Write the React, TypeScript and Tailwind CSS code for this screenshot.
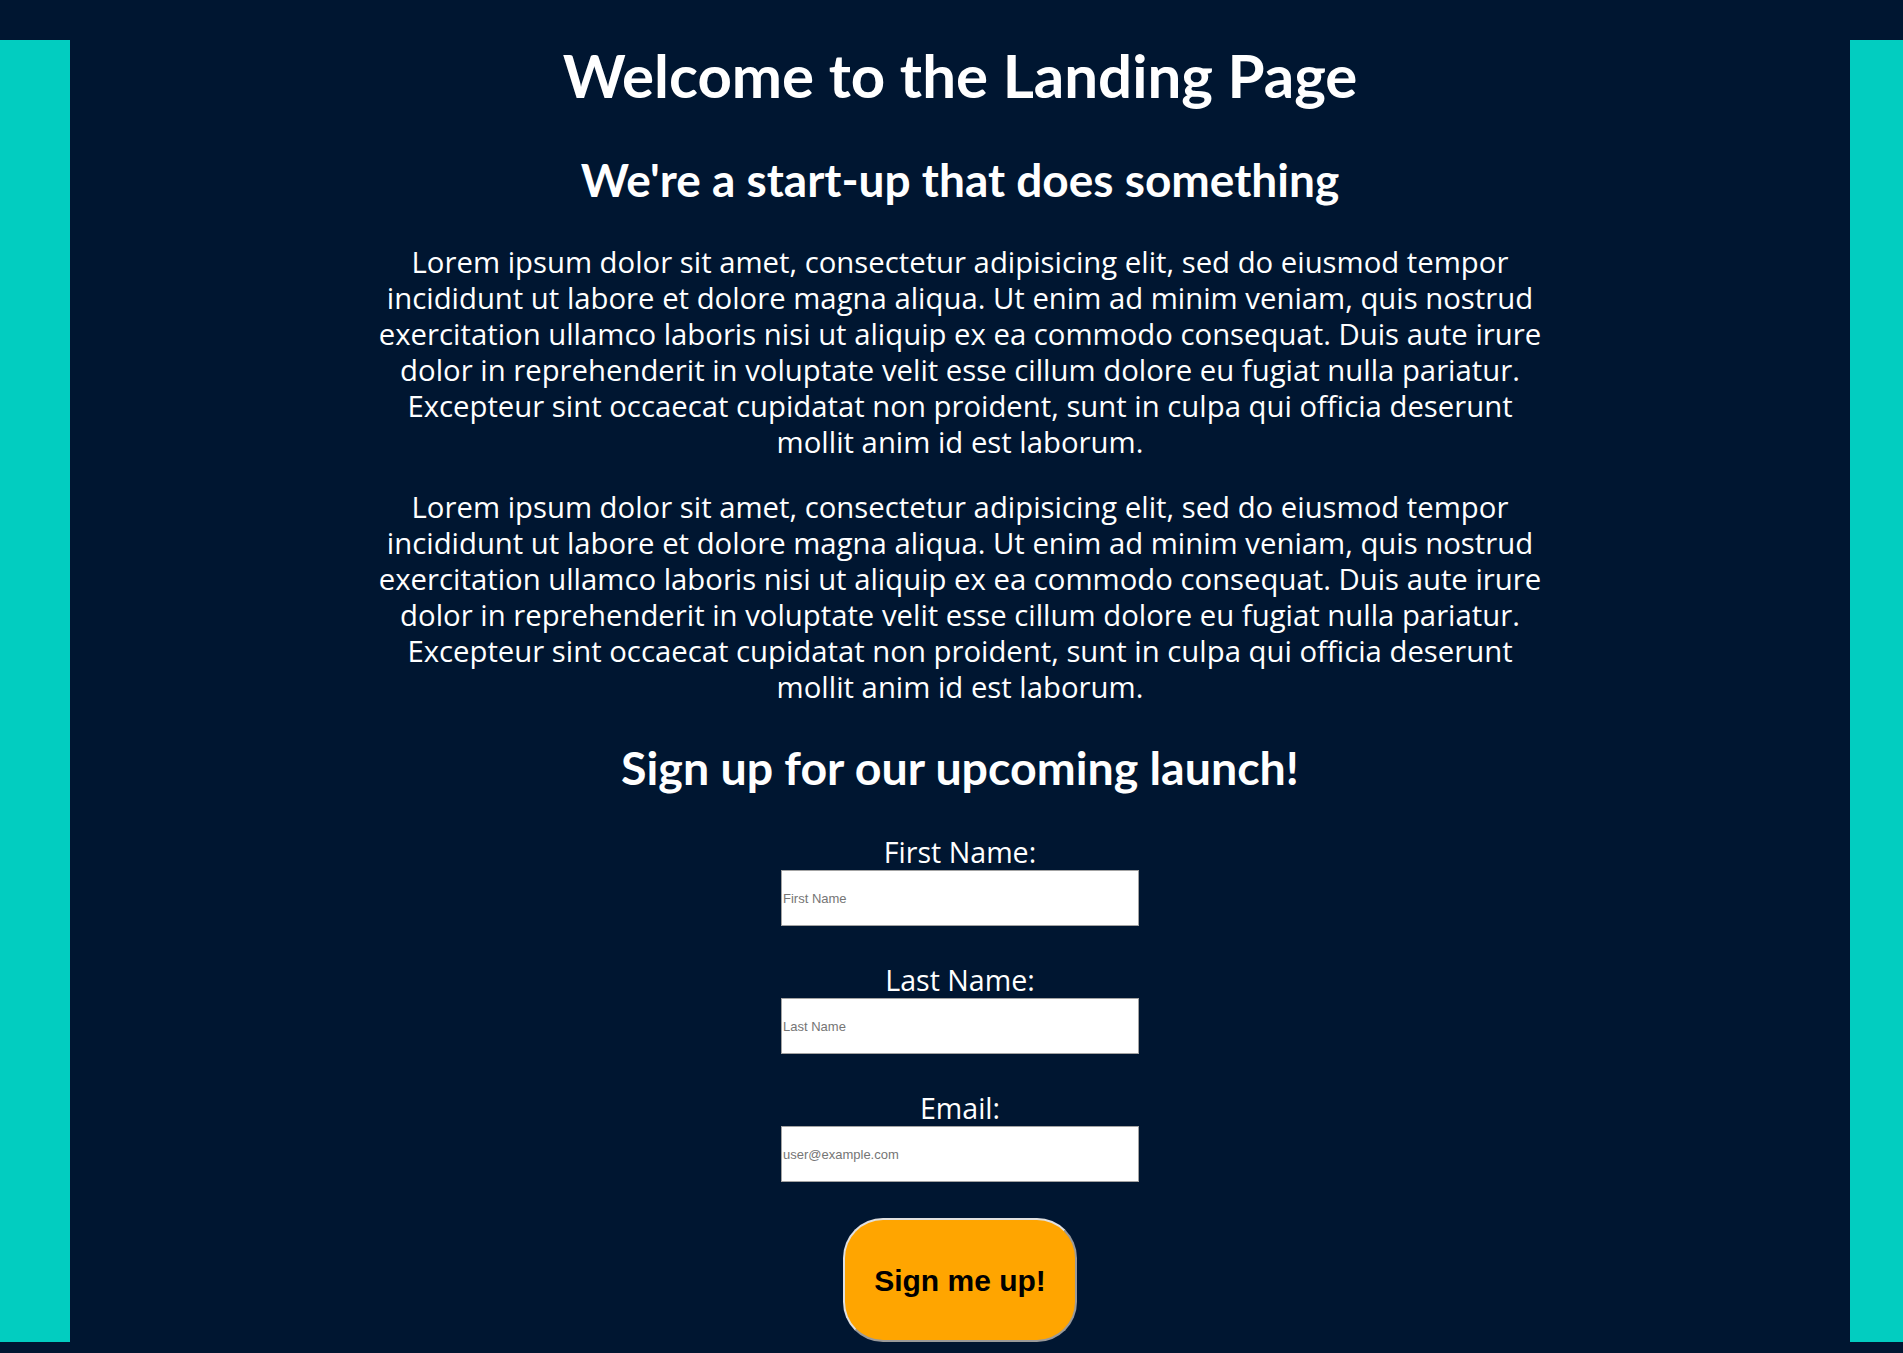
const lorem = [
  "Lorem ipsum dolor sit amet, consectetur adipisicing elit, sed do eiusmod tempor",
  "incididunt ut labore et dolore magna aliqua. Ut enim ad minim veniam, quis nostrud",
  "exercitation ullamco laboris nisi ut aliquip ex ea commodo consequat. Duis aute irure",
  "dolor in reprehenderit in voluptate velit esse cillum dolore eu fugiat nulla pariatur.",
  "Excepteur sint occaecat cupidatat non proident, sunt in culpa qui officia deserunt",
  "mollit anim id est laborum.",
];

const fields = [
  { id: "first", label: "First Name:", placeholder: "First Name", type: "text" },
  { id: "last", label: "Last Name:", placeholder: "Last Name", type: "text" },
  { id: "email", label: "Email:", placeholder: "user@example.com", type: "email" },
];

function Paragraph({ className = "" }: { className?: string }) {
  return (
    <p className={`font-['Open_Sans',sans-serif] text-[29.3px] leading-[36px] text-white text-center whitespace-nowrap ${className}`}>
      {lorem.map((line, i) => (
        <span key={i}>
          {line}
          {i < lorem.length - 1 && <br />}
        </span>
      ))}
    </p>
  );
}

export default function App() {
  return (
    <div className="w-full h-[1353px] overflow-hidden bg-[#001631] pt-[40px] font-['Lato',sans-serif]">
      <div className="flex h-[1302px]">
        {/* left bar */}
        <div className="w-[70px] shrink-0 bg-[#02cdc0]" />

        {/* main column */}
        <main className="flex-1 flex flex-col items-center bg-[#001631]">
          <h1 className="mt-[-1px] text-[60px] leading-[72px] font-bold text-white">
            Welcome to the Landing Page
          </h1>
          <h2 className="mt-[46px] text-[46px] leading-[46px] font-bold text-white">
            We're a start-up that does something
          </h2>

          <Paragraph className="mt-[41px]" />
          <Paragraph className="mt-[29px]" />

          <h3 className="mt-[39px] text-[46.5px] leading-[46px] font-bold text-white">
            Sign up for our upcoming launch!
          </h3>

          {/* signup form */}
          <form className="mt-[47px] flex flex-col items-center">
            {fields.map((f, i) => (
              <div key={f.id} className={`flex flex-col items-center ${i > 0 ? "mt-[39px]" : ""}`}>
                <label htmlFor={f.id} className="font-['Open_Sans',sans-serif] text-[28.6px] leading-[30px] text-white">
                  {f.label}
                </label>
                <input
                  id={f.id}
                  type={f.type}
                  placeholder={f.placeholder}
                  className="mt-[3px] w-[358px] h-[56px] bg-white border border-[#a3a3a3] px-[1px] text-[13px] font-['Liberation_Sans',Arial,sans-serif] text-black placeholder:text-[#757575] outline-none"
                />
              </div>
            ))}

            <button
              type="button"
              className="mt-[36px] w-[234px] h-[124px] shrink-0 rounded-[40px] bg-[#ffa500] border-2 border-t-[#e0e0e0] border-l-[#e0e0e0] border-r-[#9a9a9a] border-b-[#9a9a9a] text-[30px] font-bold text-black font-['Liberation_Sans',Arial,sans-serif]"
            >
              Sign me up!
            </button>
          </form>
        </main>

        {/* right bar */}
        <div className="w-[53px] shrink-0 bg-[#02cdc0]" />
      </div>
    </div>
  );
}
